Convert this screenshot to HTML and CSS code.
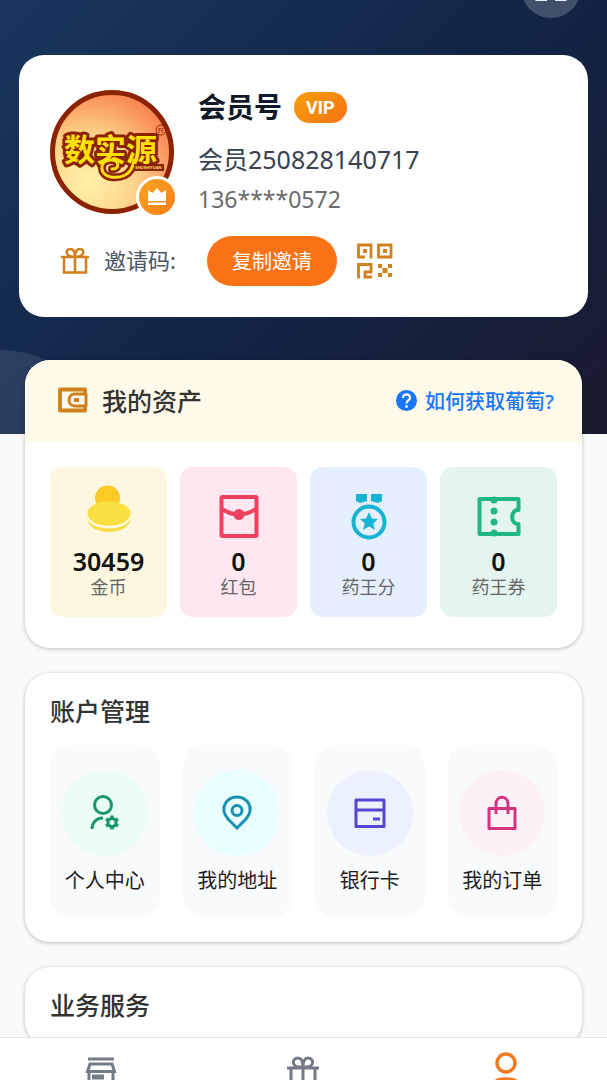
FILE: index.html
```html
<!DOCTYPE html>
<html lang="zh-CN">
<head>
    <meta charset="utf-8">
    <meta name="viewport" content="width=device-width, initial-scale=1">
    <title>我的</title>
    <link rel="stylesheet" href="styles.css">
</head>
<body>
    <div class="header">
        <button class="scan" type="button" aria-label="扫一扫">
            <svg width="60" height="60" viewBox="0 0 60 60"><path d="M16 25V16H25M35 16H44V25M44 34V41.500H34M26 41.500H16V34" fill="none" stroke="#e6f0fa" stroke-width="3"/></svg>
        </button>
        <div class="profile">
            <div class="user">
                <div class="avatar">
                    <svg width="124" height="124" viewBox="0 0 124 124">
                        <defs>
                            <radialGradient id="face" cx="0.3" cy="0.75" r="0.8">
                                <stop offset="0" stop-color="#fff3a8"/>
                                <stop offset="0.5" stop-color="#fdd28a"/>
                                <stop offset="1" stop-color="#f98350"/>
                            </radialGradient>
                        </defs>
                        <circle cx="62" cy="62" r="59.500" fill="url(#face)" stroke="#8c2300" stroke-width="5"/>
                        <path d="M84 70C82 87 69 88 61 87C49 85 49 71 60 70C70 69 70 80 62 79" fill="none" stroke="#8c2300" stroke-width="8" stroke-linecap="round"/>
                        <text class="logo" x="14" y="71">数实源</text>
                        <path d="M84 70C82 87 69 88 61 87C49 85 49 71 60 70C70 69 70 80 62 79" fill="none" stroke="#ffdf0c" stroke-width="3" stroke-linecap="round"/>
                        <rect x="84" y="74" width="30" height="7" fill="#8c2300"/>
                        <text class="logo_en" x="85" y="79">SHUSHIYUAN</text>
                        <circle cx="111" cy="40" r="5" fill="none" stroke="#8c2300"/>
                        <text class="logo_r" x="108" y="43">R</text>
                    </svg>
                    <span class="crown">
                        <svg width="20" height="20" viewBox="0 0 20 20" fill="#fff"><path d="M1 3L5.500 6L10 1L14.500 6L19 3V14H1ZM1 15.500H19V18H1Z"/></svg>
                    </span>
                </div>
                <div class="info">
                    <div class="name">会员号<span class="vip">VIP</span></div>
                    <div class="account">会员250828140717</div>
                    <div class="phone">136****0572</div>
                </div>
            </div>
            <div class="invite">
                <svg width="30" height="28" viewBox="0 0 30 28" fill="none" stroke="#d0801c" stroke-width="2.500"><path d="M1 10H29M4 10V25.500H26V10M15 10V25M15 10C5 10 5 2 10 2C14 2 15 5 15 10C15 5 16 2 20 2C25 2 25 10 15 10"/></svg>
                <span class="invite_label">邀请码:</span>
                <button class="copy" type="button">复制邀请</button>
                <button class="qr" type="button" aria-label="二维码">
                    <svg width="36" height="36" viewBox="0 0 36 36">
                        <path fill="none" stroke="#d0801c" stroke-width="2.800" d="M8 14H1.500V2H14V15.500M21.500 2H34V14H21.500ZM1.500 35.500V21.500H14V29H8V34H15"/>
                        <path fill="#d0801c" d="M6 6H10V10H6ZM26 6H30V10H26ZM21 21H25V25H21ZM31 21H35V25H31ZM25.500 25H30.500V30H25.500ZM21 30H25V34H21ZM31 30H35V34H31Z"/>
                    </svg>
                </button>
            </div>
        </div>
    </div>

    <div class="card assets">
        <div class="assets_top">
            <svg width="30" height="26" viewBox="0 0 30 26" fill="none" stroke="#d0801c" stroke-linejoin="round"><path d="M27 6V2.500H2V23.500H27V20" stroke-width="3.800"/><path d="M28 7H17C9 7 9 19 17 19H28Z" stroke-width="3"/><path d="M16 13H21" stroke-width="4"/></svg>
            <h2>我的资产</h2>
            <a class="help" href="#">
                <svg width="21" height="21" viewBox="0 0 21 21"><circle cx="10.500" cy="10.500" r="10.500" fill="#1877f8"/><path d="M7 8C7 3 14 3.500 14 8C14 10.500 10.500 10.500 10.500 13.500" fill="none" stroke="#fff" stroke-width="2.200"/><circle cx="10.500" cy="16.500" r="1.400" fill="#fff"/></svg>
                如何获取葡萄?
            </a>
        </div>
        <div class="grid asset_list">
            <a class="asset gold" href="#">
                <svg width="44" height="50" viewBox="0 0 44 50"><circle cx="20.500" cy="9" r="12.500" fill="#fcca24"/><ellipse cx="22" cy="30" rx="21.500" ry="13" fill="#f9dc45"/><path d="M0 24C2 41 42 41 44 24V29C39 43 5 43 0 29Z" fill="#fffadf"/><ellipse cx="22" cy="24" rx="21.500" ry="11.500" fill="#fae042"/></svg>
                <b>30459</b><span>金币</span>
            </a>
            <a class="asset red" href="#">
                <svg width="44" height="50" viewBox="0 0 44 50" fill="none" stroke="#f0405f" stroke-width="4"><rect x="4.500" y="8" width="35" height="39" rx="1"/><path d="M5 20Q22 31 39 20"/><circle cx="22" cy="25.500" r="5.500" fill="#f0405f" stroke="none"/></svg>
                <b>0</b><span>红包</span>
            </a>
            <a class="asset blue" href="#">
                <svg width="44" height="50" viewBox="0 0 44 50" fill="#17b4d5"><path d="M9 5H20V12L13 14L9 12ZM24 5H35V12L31 14L24 12Z"/><circle cx="22" cy="33" r="15.500" fill="none" stroke="#17b4d5" stroke-width="4"/><path d="M22 23L24.800 29.500L31 30L26.200 34.500L28 41L22 37.500L16 41L17.800 34.500L13 30L19.200 29.500Z"/></svg>
                <b>0</b><span>药王分</span>
            </a>
            <a class="asset green" href="#">
                <svg width="44" height="50" viewBox="0 0 44 50" fill="none" stroke="#1fb883" stroke-width="4"><path d="M2.500 10H41.500V21C33 20 33 36 41.500 35V45H2.500Z" stroke-linejoin="round"/><g fill="#1fb883" stroke="none"><circle cx="17" cy="11" r="3.500"/><circle cx="17" cy="22" r="3.500"/><circle cx="17" cy="33" r="3.500"/><circle cx="17" cy="44" r="3.500"/></g></svg>
                <b>0</b><span>药王券</span>
            </a>
        </div>
    </div>

    <div class="card">
        <h2 class="title">账户管理</h2>
        <div class="grid menu_list">
            <a class="menu" href="#">
                <span class="round mint"><svg width="36" height="36" viewBox="0 0 36 36" fill="none" stroke="#17976a" stroke-width="3"><circle cx="16" cy="10" r="8.500"/><path d="M5 34C5 27 10 23 16 23"/><circle cx="25" cy="27.500" r="4"/><path stroke-width="3.500" d="M25 20.500V24M25 31V34.500M19 24L22 25.700M28 29.300L31 31M19 31L22 29.300M28 25.700L31 24"/></svg></span>
                个人中心
            </a>
            <a class="menu" href="#">
                <span class="round cyan"><svg width="36" height="36" viewBox="0 0 36 36" fill="none" stroke="#1a91b2" stroke-width="3"><path d="M18 33L9 24C-1 12 9 2 18 2C27 2 37 12 27 24Z"/><circle cx="18" cy="15.500" r="5"/></svg></span>
                我的地址
            </a>
            <a class="menu" href="#">
                <span class="round violet"><svg width="36" height="36" viewBox="0 0 36 36" fill="none" stroke="#5046d2" stroke-width="3"><path d="M4 5H32V31.500H4ZM4 15H32M21 24H28" stroke-linejoin="round"/></svg></span>
                银行卡
            </a>
            <a class="menu" href="#">
                <span class="round pink"><svg width="36" height="36" viewBox="0 0 36 36" fill="none" stroke="#d43380" stroke-width="3"><path d="M5 13.500H31V33.500H5ZM12 19V9C12 0 24 0 24 9V19" stroke-linejoin="round"/></svg></span>
                我的订单
            </a>
        </div>
    </div>

    <div class="card">
        <h2 class="title">业务服务</h2>
    </div>

    <div class="tabbar">
        <a href="#" aria-label="首页"><svg width="32" height="34" viewBox="0 0 32 34" fill="none" stroke="#737b89" stroke-width="3"><path d="M3 4H29M5 9H27L29.500 16.500H2.500ZM4 16V34M28 16V34"/><path d="M7 22H19" stroke-width="5"/></svg></a>
        <a href="#" aria-label="礼物"><svg width="34" height="34" viewBox="0 0 34 34" fill="none" stroke="#737b89" stroke-width="3"><path d="M1 13H33M5 13V34M29 13V34M17 13V34M17 12C4 13 6 3 12 3C16 3 17 7 17 12C17 7 18 3 22 3C28 3 30 13 17 12"/></svg></a>
        <a href="#" aria-label="我的"><svg width="32" height="34" viewBox="0 0 32 34" fill="none" stroke="#f27a1f" stroke-width="3.500"><circle cx="16" cy="8" r="9"/><path d="M4 34C5 24 8 24 16 24C24 24 27 24 28 34"/></svg></a>
    </div>
</body>
</html>
```
FILE: styles.css
```css
*{
    box-sizing: border-box;
}
html{
    overflow: hidden;
}
body{
    margin: 0;
    height: 100vh;
    overflow: hidden;
    background: #f9fafc;
    color: #1c1c1c;
    font-family: "Noto Sans", "Noto Sans CJK SC", sans-serif;
}
svg{
    display: block;
    flex: none;
    overflow: visible;
}
a{
    color: inherit;
    text-decoration: none;
}
button{
    border: 0;
    padding: 0;
    font-family: inherit;
}
h2{
    margin: 0;
    font-size: 25px;
    line-height: 34px;
    font-weight: 500;
    color: #333;
    font-family: "Noto Sans CJK SC", sans-serif;
}

/* header */
.header{
    position: relative;
    overflow: hidden;
    padding: 55px 19px 117px;
    background: linear-gradient(135deg, #1a365d 0%, #122548 50%, #1a1a2e 100%);
}
.header::after{
    content: "";
    position: absolute;
    left: -96px;
    bottom: -112px;
    width: 196px;
    height: 196px;
    border-radius: 50%;
    background: rgba(255,255,255,0.1);
}
.scan{
    position: absolute;
    top: -42px;
    right: 26px;
    width: 60px;
    height: 60px;
    border-radius: 50%;
    background: rgba(255,255,255,0.2);
}
.profile{
    padding: 35px 31px 31px;
    border-radius: 25px;
    background: #fff;
}
.user{
    display: flex;
    gap: 24px;
}
.avatar{
    position: relative;
    width: 124px;
    height: 124px;
}
.logo{
    font-family: "Noto Sans CJK SC", sans-serif;
    font-size: 31px;
    font-weight: 700;
    fill: #ffdf0c;
    stroke: #8c2300;
    stroke-width: 6px;
    stroke-linejoin: round;
    paint-order: stroke;
}
.logo_en{
    font-family: "Liberation Sans", sans-serif;
    font-size: 4px;
    font-weight: bold;
    fill: #ffdf6c;
}
.logo_r{
    font-family: "Liberation Sans", sans-serif;
    font-size: 8px;
    fill: #8c2300;
}
.crown{
    position: absolute;
    right: -4px;
    bottom: -4px;
    display: flex;
    align-items: center;
    justify-content: center;
    width: 42px;
    height: 42px;
    border: 3px solid #fff;
    border-radius: 50%;
    background: linear-gradient(135deg, #f8a622, #f97c18);
}
.name{
    display: flex;
    align-items: center;
    gap: 12px;
    height: 34px;
    font-size: 28px;
    line-height: 34px;
    font-weight: 700;
    color: #111827;
}
.vip{
    padding: 0 12px;
    border-radius: 16px;
    background: linear-gradient(135deg, #f59e0b, #f97316);
    color: #fff;
    font: bold 18px/31px Roboto, sans-serif;
}
.account{
    margin-top: 18px;
    font-size: 25px;
    line-height: 34px;
    color: #374151;
}
.phone{
    margin-top: 10px;
    font-size: 23px;
    line-height: 26px;
    color: #6b6b6b;
}
.invite{
    display: flex;
    align-items: center;
    margin-top: 22px;
    padding-left: 10px;
}
.invite_label{
    margin-left: 14px;
    padding-bottom: 2px;
    font-size: 22px;
    line-height: 32px;
    color: #4b5563;
}
.copy{
    height: 50px;
    margin: 0 20px 0 31px;
    padding: 0 25px 2px;
    border-radius: 25px;
    background: #f97316;
    color: #fff;
    font-size: 20px;
}
.qr{
    background: none;
}

/* cards */
.card{
    position: relative;
    margin: 0 25px 25px;
    padding: 20px 25px 25px;
    border-radius: 25px;
    background: #fff;
    box-shadow: 0 1px 4px rgba(0,0,0,0.25);
}
.assets{
    margin-top: -74px;
    padding: 0;
    overflow: hidden;
}
.assets_top{
    display: flex;
    align-items: center;
    height: 82px;
    padding: 0 28px 2px 33px;
    background: #fffae9;
}
.assets_top h2{
    margin-left: 14px;
}
.help{
    display: flex;
    align-items: center;
    gap: 8px;
    margin-left: auto;
    font-size: 20px;
    font-weight: 500;
    color: #1877f8;
}
.grid{
    display: grid;
    grid-template-columns: repeat(4, 1fr);
}
.asset_list{
    gap: 13px;
    padding: 25px 25px 31px;
}
.asset{
    display: flex;
    flex-direction: column;
    align-items: center;
    height: 150px;
    padding-top: 22px;
    border-radius: 13px;
}
.asset b{
    margin-top: 8px;
    font-size: 25px;
    line-height: 28px;
    font-weight: 600;
    color: #111;
}
.asset span{
    font-size: 18px;
    line-height: 25px;
    color: #666;
}
.gold{
    background: #fdf7df;
}
.red{
    background: #ffe6f0;
}
.blue{
    background: #e5efff;
}
.green{
    background: #e4f4ee;
}
.menu_list{
    gap: 23px;
    margin-top: 18px;
}
.menu{
    display: flex;
    flex-direction: column;
    align-items: center;
    height: 172px;
    padding-top: 25px;
    border-radius: 19px;
    background: #f9fafc;
    font-size: 20px;
    line-height: 28px;
}
.round{
    display: flex;
    align-items: center;
    justify-content: center;
    width: 86px;
    height: 86px;
    margin-bottom: 11px;
    border-radius: 50%;
}
.mint{
    background: #ebfdf4;
}
.cyan{
    background: #e8feff;
}
.violet{
    background: #ecf1ff;
}
.pink{
    background: #fdf0f7;
}

/* bottom tabs */
.tabbar{
    position: fixed;
    left: 0;
    right: 0;
    bottom: 0;
    display: flex;
    height: 43px;
    overflow: hidden;
    border-top: 1px solid #e3e5e9;
    background: #fff;
}
.tabbar a{
    display: flex;
    flex: 1;
    justify-content: center;
    padding-top: 17px;
}
```
